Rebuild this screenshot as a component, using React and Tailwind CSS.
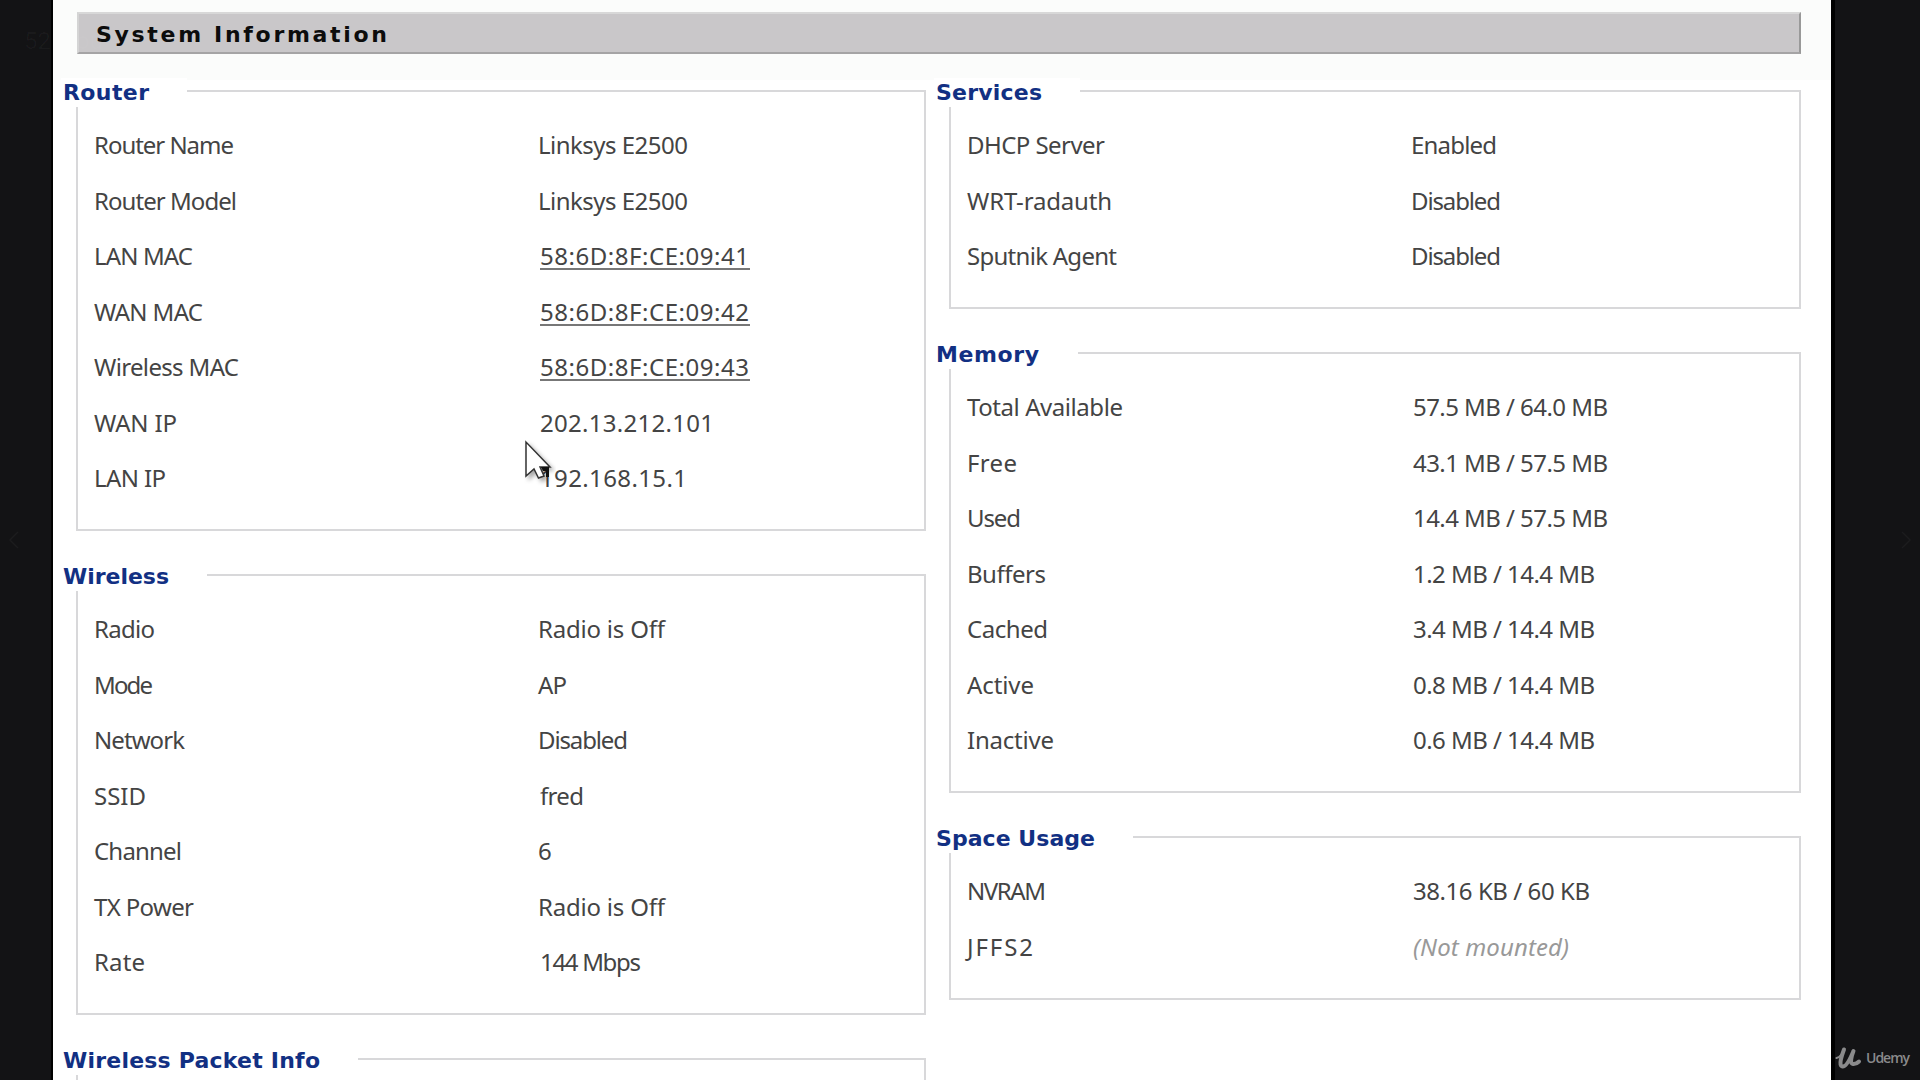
import { useLayoutEffect, useRef } from "react";

// Text run spaced out to fill a given width.
function Fit({ w, children, className = "" }) {
  const ref = useRef(null);
  useLayoutEffect(() => {
    const el = ref.current;
    el.style.letterSpacing = "0px";
    const n = String(children).length - 1;
    if (n > 0) el.style.letterSpacing = (w - el.getBoundingClientRect().width) / n + "px";
  }, [w, children]);
  return <span ref={ref} className={"inline-block whitespace-pre " + className}>{children}</span>;
}

function Panel({ title, titleW, rows }) {
  return (
    <section className="min-h-[60px] border-2 border-[#d8d8da] pb-[23px]">
      <h2 className="relative -ml-[17px] -mt-[14px] mb-[11px] h-[29px] w-fit bg-white pl-[2px] pr-[38px] pt-[1px] font-['DejaVu_Sans',sans-serif] text-[22px] leading-[28px] font-bold text-[#123083]">
        <Fit w={titleW}>{title}</Fit>
      </h2>
      {rows.map(([label, lw, value, vw, kind]) => (
        <div key={label} className="grid h-[55.5px] grid-cols-[444px_1fr] items-center pl-[16px]">
          <span><Fit w={lw}>{label}</Fit></span>
          <span className={kind ? "pl-[2px]" : ""}>
            <Fit
              w={vw}
              className={
                kind === "link"
                  ? "-mb-[2px] h-[28px] border-b-2 border-[#777] leading-[27px]"
                  : kind === "none"
                  ? "italic text-[#999]"
                  : ""
              }
            >
              {value}
            </Fit>
          </span>
        </div>
      ))}
    </section>
  );
}

const router = [
  ["Router Name", 140, "Linksys E2500", 150],
  ["Router Model", 143, "Linksys E2500", 150],
  ["LAN MAC", 99, "58:6D:8F:CE:09:41", 209, "link"],
  ["WAN MAC", 109, "58:6D:8F:CE:09:42", 209, "link"],
  ["Wireless MAC", 145, "58:6D:8F:CE:09:43", 209, "link"],
  ["WAN IP", 83, "202.13.212.101", 174, "num"],
  ["LAN IP", 72, "192.168.15.1", 147, "num"],
];
const wireless = [
  ["Radio", 61, "Radio is Off", 127],
  ["Mode", 59, "AP", 29],
  ["Network", 91, "Disabled", 90],
  ["SSID", 52, "fred", 44, "num"],
  ["Channel", 88, "6", 13],
  ["TX Power", 100, "Radio is Off", 127],
  ["Rate", 51, "144 Mbps", 101, "num"],
];
const services = [
  ["DHCP Server", 138, "Enabled", 86],
  ["WRT-radauth", 145, "Disabled", 90],
  ["Sputnik Agent", 150, "Disabled", 90],
];
const memory = [
  ["Total Available", 156, "57.5 MB / 64.0 MB", 195, "num"],
  ["Free", 50, "43.1 MB / 57.5 MB", 195, "num"],
  ["Used", 54, "14.4 MB / 57.5 MB", 195, "num"],
  ["Buffers", 79, "1.2 MB / 14.4 MB", 182, "num"],
  ["Cached", 81, "3.4 MB / 14.4 MB", 182, "num"],
  ["Active", 67, "0.8 MB / 14.4 MB", 182, "num"],
  ["Inactive", 87, "0.6 MB / 14.4 MB", 182, "num"],
];
const space = [
  ["NVRAM", 79, "38.16 KB / 60 KB", 177, "num"],
  ["JFFS2", 66, "(Not mounted)", 156, "none"],
];

export default function App() {
  return (
    <div className="relative flex h-[1080px] w-[1920px] overflow-hidden bg-[#131315] font-['Noto_Sans',sans-serif] text-[24px] text-[#444]">
      <div className="flex w-[53px] shrink-0 items-center border-r-2 border-black pl-[8px]">
        <svg width="12" height="18" viewBox="0 0 12 18" fill="none" stroke="#1c1c1e" strokeWidth="1.5"><path d="M10 1L2 9l8 8" /></svg>
      </div>
      <main className="h-[1080px] w-[1778px] shrink-0 bg-white">
        <div className="h-[80px] bg-[#fbfcfb] pl-[24px] pt-[12px]">
          <header className="h-[42px] w-[1724px] border-2 border-t-[#d8d8d8] border-l-[#d4d4d4] border-r-[#999] border-b-[#a5a4a5] bg-[#c9c7c9] pl-[17px] pt-[1px] font-['DejaVu_Sans',sans-serif] text-[22px] leading-[39px] font-bold text-[#0c0c0c]">
            <Fit w={291}>System Information</Fit>
          </header>
        </div>
        <div className="flex gap-[23px] pl-[23px] pt-[9.5px]">
          <div className="flex w-[850px] flex-col gap-[42.5px]">
            <Panel title="Router" titleW={86} rows={router} />
            <Panel title="Wireless" titleW={106} rows={wireless} />
            <Panel title="Wireless Packet Info" titleW={257} rows={[]} />
          </div>
          <div className="flex w-[852px] flex-col gap-[42.5px]">
            <Panel title="Services" titleW={106} rows={services} />
            <Panel title="Memory" titleW={103} rows={memory} />
            <Panel title="Space Usage" titleW={159} rows={space} />
          </div>
        </div>
      </main>
      <aside className="flex w-[89px] shrink-0 flex-col items-end border-l-4 border-black">
        <svg className="mt-[531px] mr-[8px]" width="12" height="18" viewBox="0 0 12 18" fill="none" stroke="#1c1c1e" strokeWidth="1.5"><path d="M2 1l8 8-8 8" /></svg>
        <div className="mt-auto mb-[10px] flex w-[85px] items-center gap-[4px] text-[#8a8a8b]">
          <svg width="27" height="24" viewBox="0 0 27 24" fill="none" stroke="currentColor" strokeLinecap="round" strokeLinejoin="round">
            <path d="M1.500 12C5 11.500 8 7 9 3.500" strokeWidth="2" />
            <path d="M9 3.500C7 9 3 20 7.500 20.500C11.500 21 16 11 18.500 5C16.500 10 14.500 17.500 18 18C21 18.300 22.500 17 24 15.500" strokeWidth="4" />
          </svg>
          <span className="font-['Open_Sans',sans-serif] text-[14px] leading-[20px] font-semibold"><Fit w={44}>Udemy</Fit></span>
        </div>
      </aside>
      <span className="absolute left-[24px] top-[28px] font-[Roboto,sans-serif] text-[24px] leading-[26px] text-white/[0.03]">52. Tou</span>
      <svg className="absolute left-[522px] top-[438px]" width="34" height="48" viewBox="0 0 34 48">
        <path d="M4 4v34l8-7 4.500 9 5.500-2-4-9h10z" fill="#fff" stroke="#333" strokeWidth="1.500" className="drop-shadow-[3px_3px_2px_rgba(0,0,0,0.35)]" />
        <path d="M19 29h8v10h-3v-6h-3z" fill="#111" />
      </svg>
    </div>
  );
}
